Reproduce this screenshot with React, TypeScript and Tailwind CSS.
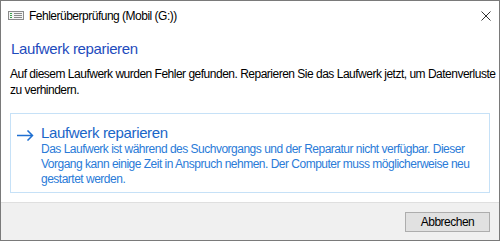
import React from 'react';

const FONT = { fontFamily: '"Segoe UI", "Liberation Sans", Arial, sans-serif' };

function AppIcon() {
  return (
    <svg width="16" height="9" viewBox="0 0 16 9" className="shrink-0">
      <rect x="0.5" y="0.5" width="15" height="8" fill="#f4f4f4" stroke="#8a8a8a" />
      <rect x="2" y="2" width="2" height="1" fill="#3aa04a" />
      <rect x="2" y="4" width="2" height="1" fill="#3aa04a" />
      <rect x="2" y="6" width="2" height="1" fill="#3aa04a" />
      <rect x="6" y="2" width="8" height="1" fill="#8a8a8a" />
      <rect x="6" y="4" width="8" height="1" fill="#8a8a8a" />
      <rect x="6" y="6" width="8" height="1" fill="#8a8a8a" />
    </svg>
  );
}

function CloseIcon() {
  return (
    <svg width="10" height="10" viewBox="0 0 10 10">
      <path d="M0.5 0.5 L9.5 9.5 M9.5 0.5 L0.5 9.5" stroke="#333" strokeWidth="1" fill="none" />
    </svg>
  );
}

function ArrowIcon() {
  return (
    <svg width="17" height="11" viewBox="0 0 17 11" className="shrink-0">
      <path d="M0 5.5 H15.5 M10.5 0.5 L15.5 5.5 L10.5 10.5" stroke="#1f6fd1" strokeWidth="1.5" fill="none" />
    </svg>
  );
}

export default function App() {
  return (
    <div
      className="w-[500px] h-[241px] bg-white border border-[#7a7a7a] flex flex-col text-[12px] tracking-[-0.5px] text-black antialiased overflow-hidden"
      style={FONT}
    >
      <div className="h-[29px] shrink-0 flex items-center pl-[7px] pr-[8px]">
        <AppIcon />
        <span className="ml-[5px] text-[12px] text-black">Fehlerüberprüfung (Mobil (G:))</span>
        <div className="ml-auto">
          <CloseIcon />
        </div>
      </div>

      <div className="flex-1 flex flex-col px-[9px]">
        <h1 className="text-[15px] leading-[20px] tracking-[-0.35px] text-[#1e4bbd] mt-[9px] pl-[1px]">
          Laufwerk reparieren
        </h1>
        <p className="mt-[7px] leading-[16px]">
          <span className="block whitespace-nowrap">
            Auf diesem Laufwerk wurden Fehler gefunden. Reparieren Sie das Laufwerk jetzt, um Datenverluste
          </span>
          <span className="block whitespace-nowrap">zu verhindern.</span>
        </p>

        <div className="mt-[15px] h-[80px] border border-[#c6e1f7] flex pl-[6px] pt-[10px]">
          <div className="pt-[6px]">
            <ArrowIcon />
          </div>
          <div className="ml-[7px]">
            <div className="text-[15px] leading-[18px] tracking-[-0.35px] text-[#1a66c8]">Laufwerk reparieren</div>
            <div className="text-[12px] leading-[15px] text-[#2a7bd8]">
              <span className="block whitespace-nowrap">
                Das Laufwerk ist während des Suchvorgangs und der Reparatur nicht verfügbar. Dieser
              </span>
              <span className="block whitespace-nowrap">
                Vorgang kann einige Zeit in Anspruch nehmen. Der Computer muss möglicherweise neu
              </span>
              <span className="block whitespace-nowrap">gestartet werden.</span>
            </div>
          </div>
        </div>
      </div>

      <div className="h-[38px] shrink-0 bg-[#f0f0f0] border-t border-[#dfdfdf] flex items-center justify-end pr-[9px]">
        <button className="w-[85px] h-[20px] bg-[#e1e1e1] border border-[#adadad] text-[12px] text-black leading-none">
          Abbrechen
        </button>
      </div>
    </div>
  );
}
